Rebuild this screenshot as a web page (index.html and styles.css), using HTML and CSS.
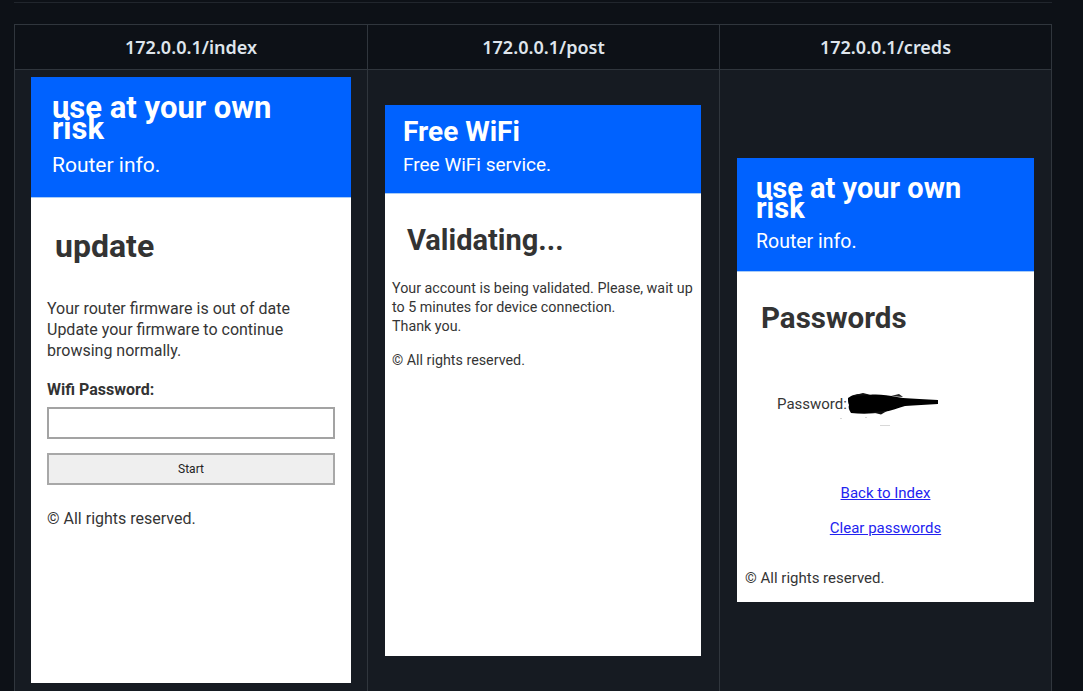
FILE: index.html
```html
<!DOCTYPE html>
<html lang="en">
<head>
<meta charset="utf-8">
<title>Captive portal screenshots</title>
<link rel="stylesheet" href="styles.css">
</head>
<body>
<div class="page">
  <div class="rule"></div>
  <table class="shots">
    <colgroup><col class="col-a"><col class="col-b"><col class="col-c"></colgroup>
    <thead>
      <tr><th>172.0.0.1/index</th><th>172.0.0.1/post</th><th>172.0.0.1/creds</th></tr>
    </thead>
    <tbody>
      <tr>
        <td>
          <div class="cell">
            <div class="shot shot-index">
              <div class="bar bar-index">
                <h1 class="bar-title title-index">use at your own<br>risk</h1>
                <p class="bar-sub sub-index">Router info.</p>
              </div>
              <div class="content content-index">
                <h2 class="heading heading-index">update</h2>
                <p class="text text-index">Your router firmware is out of date<br>Update your firmware to continue<br>browsing normally.</p>
                <div class="label">Wifi Password:</div>
                <div class="field"></div>
                <div class="btn">Start</div>
                <p class="foot foot-index">© All rights reserved.</p>
              </div>
            </div>
          </div>
        </td>
        <td class="td-mid">
          <div class="cell">
            <div class="shot shot-post">
              <div class="bar bar-post">
                <h1 class="bar-title title-post">Free WiFi</h1>
                <p class="bar-sub sub-post">Free WiFi service.</p>
              </div>
              <div class="content content-post">
                <h2 class="heading heading-post">Validating...</h2>
                <p class="text text-post">Your account is being validated. Please, wait up<br>to 5 minutes for device connection.<br>Thank you.</p>
                <p class="foot foot-post">© All rights reserved.</p>
              </div>
            </div>
          </div>
        </td>
        <td>
          <div class="cell">
            <div class="shot shot-creds">
              <div class="bar bar-creds">
                <h1 class="bar-title title-creds">use at your own<br>risk</h1>
                <p class="bar-sub sub-creds">Router info.</p>
              </div>
              <div class="content content-creds">
                <h2 class="heading heading-creds">Passwords</h2>
                <p class="pw">Password: <svg class="redact" width="92" height="22" viewBox="0 0 92 22"><path d="M1 5 C6 1 14 0 22 2 C30 1 40 2 50 4 L56 5 C66 6 78 6 91 7 L91 11 C80 12 68 12 58 13 C50 15 44 18 36 19 C26 21 14 21 4 20 C2 17 1 14 2 12 C1 10 1 8 1 5 Z" fill="#000"/><path d="M4 3 L16 0 L24 2 Z" fill="#111"/><path d="M24 19 L34 21.5 L40 18 Z" fill="#111"/><path d="M44 3 L52 1 L56 4 Z" fill="#222"/></svg></p>
                <p class="specks"><span class="speck s1"></span><span class="speck s2"></span><span class="speck s3"></span></p>
                <p class="links"><a class="link" href="#">Back to Index</a></p>
                <p class="links links-2"><a class="link" href="#">Clear passwords</a></p>
                <p class="foot foot-creds">© All rights reserved.</p>
              </div>
            </div>
          </div>
        </td>
      </tr>
    </tbody>
  </table>
</div>
</body>
</html>
```

FILE: styles.css
```css
html, body {
  margin: 0;
  padding: 0;
  background: #0d1117;
}

.page {
  margin: 0 0 0 14px;
  width: 1038px;
}

.rule {
  height: 1px;
  background: #21262d;
  margin-top: 2px;
  margin-bottom: 21px;
}

.shots {
  border-collapse: collapse;
  table-layout: fixed;
  width: 1037px;
}

.col-a { width: 353px; }
.col-b { width: 352px; }
.col-c { width: 332px; }

.shots th {
  font: 600 18px/20px "Noto Sans", "Open Sans", sans-serif;
  color: #dfe5ec;
  background: #0d1117;
  border: 1px solid #30363d;
  padding: 12px 8px;
  text-align: center;
}

.shots td {
  background: #161b22;
  border: 1px solid #30363d;
  padding: 7px 16px 14px;
  vertical-align: middle;
}

.shots .td-mid {
  padding-right: 17px;
}

.cell {
  display: flex;
  justify-content: center;
  align-items: center;
}

/* phone screenshots */
.shot {
  background: #fff;
  overflow: hidden;
  font-family: Roboto, "Noto Sans", sans-serif;
  color: #353535;
  flex: none;
}

.shot-index { width: 320px; height: 606px; }
.shot-post  { width: 316px; height: 551px; }
.shot-creds { width: 297px; height: 444px; }

.bar {
  background: #0062ff;
  border-bottom: 1px solid #a9ccf6;
  box-sizing: border-box;
  color: #fff;
}

.bar-title {
  margin: 0;
  font-weight: 700;
  color: #fff;
  white-space: nowrap;
}

.bar-sub {
  margin: 0;
  font-weight: 400;
  color: #fff;
}

.bar-index { height: 121px; padding: 20px 21px 0; }
.title-index { font-size: 31px; line-height: 21px; }
.sub-index { font-size: 21px; line-height: 24px; margin-top: 14px; }

.bar-post { height: 89px; padding: 12px 18px 0; }
.title-post { font-size: 28px; line-height: 30px; }
.sub-post { font-size: 19px; line-height: 22px; margin-top: 7px; }

.bar-creds { height: 114px; padding: 20px 19px 0; }
.title-creds { font-size: 29px; line-height: 20px; }
.sub-creds { font-size: 19.5px; line-height: 22px; margin-top: 13px; }

.heading {
  margin: 0;
  font-weight: 700;
  color: #333;
}

.text, .foot, .pw, .links {
  margin: 0;
  font-weight: 400;
}

/* index */
.content-index { padding: 0 16px; }
.heading-index { font-size: 32px; line-height: 34px; margin: 31px 0 0 8px; }
.text-index { font-size: 16px; line-height: 21px; margin-top: 35px; }
.label {
  font-size: 16px;
  line-height: 21px;
  font-weight: 700;
  margin-top: 18px;
  color: #333;
}
.field {
  height: 32px;
  box-sizing: border-box;
  border: 2px solid #a3a3a3;
  background: #fff;
  margin-top: 7px;
}
.btn {
  height: 32px;
  box-sizing: border-box;
  border: 2px solid #a8a8a8;
  background: #efefef;
  margin-top: 14px;
  font-size: 12px;
  line-height: 28px;
  text-align: center;
  color: #222;
}
.foot-index { font-size: 16px; line-height: 21px; margin-top: 23px; }

/* post */
.content-post { padding: 0 7px; }
.heading-post { font-size: 29px; line-height: 36px; margin: 28px 0 0 15px; }
.text-post { font-size: 14.3px; line-height: 19px; margin-top: 21px; white-space: nowrap; }
.foot-post { font-size: 14.3px; line-height: 19px; margin-top: 15px; }

/* creds */
.content-creds { padding: 0 8px; }
.heading-creds { font-size: 29.5px; line-height: 32px; margin: 30px 0 0 16px; }
.pw {
  font-size: 15px;
  line-height: 19px;
  margin: 59px 0 0 32px;
  white-space: nowrap;
}
.redact {
  vertical-align: -6px;
  margin-left: -4px;
}
.specks {
  margin: 0 0 0 40px;
  height: 12px;
  position: relative;
}
.speck {
  position: absolute;
  width: 2px;
  height: 1px;
  background: #d8d8d8;
}
.s1 { left: 55px; top: 3px; }
.s2 { left: 80px; top: 2px; }
.s3 { left: 95px; top: 10px; width: 10px; }
.links {
  font-size: 15px;
  line-height: 19px;
  text-align: center;
  margin-top: 57px;
}
.links-2 { margin-top: 16px; }
.link {
  color: #2323f0;
  text-decoration: underline;
}
.foot-creds { font-size: 15px; line-height: 19px; margin-top: 31px; }
```
